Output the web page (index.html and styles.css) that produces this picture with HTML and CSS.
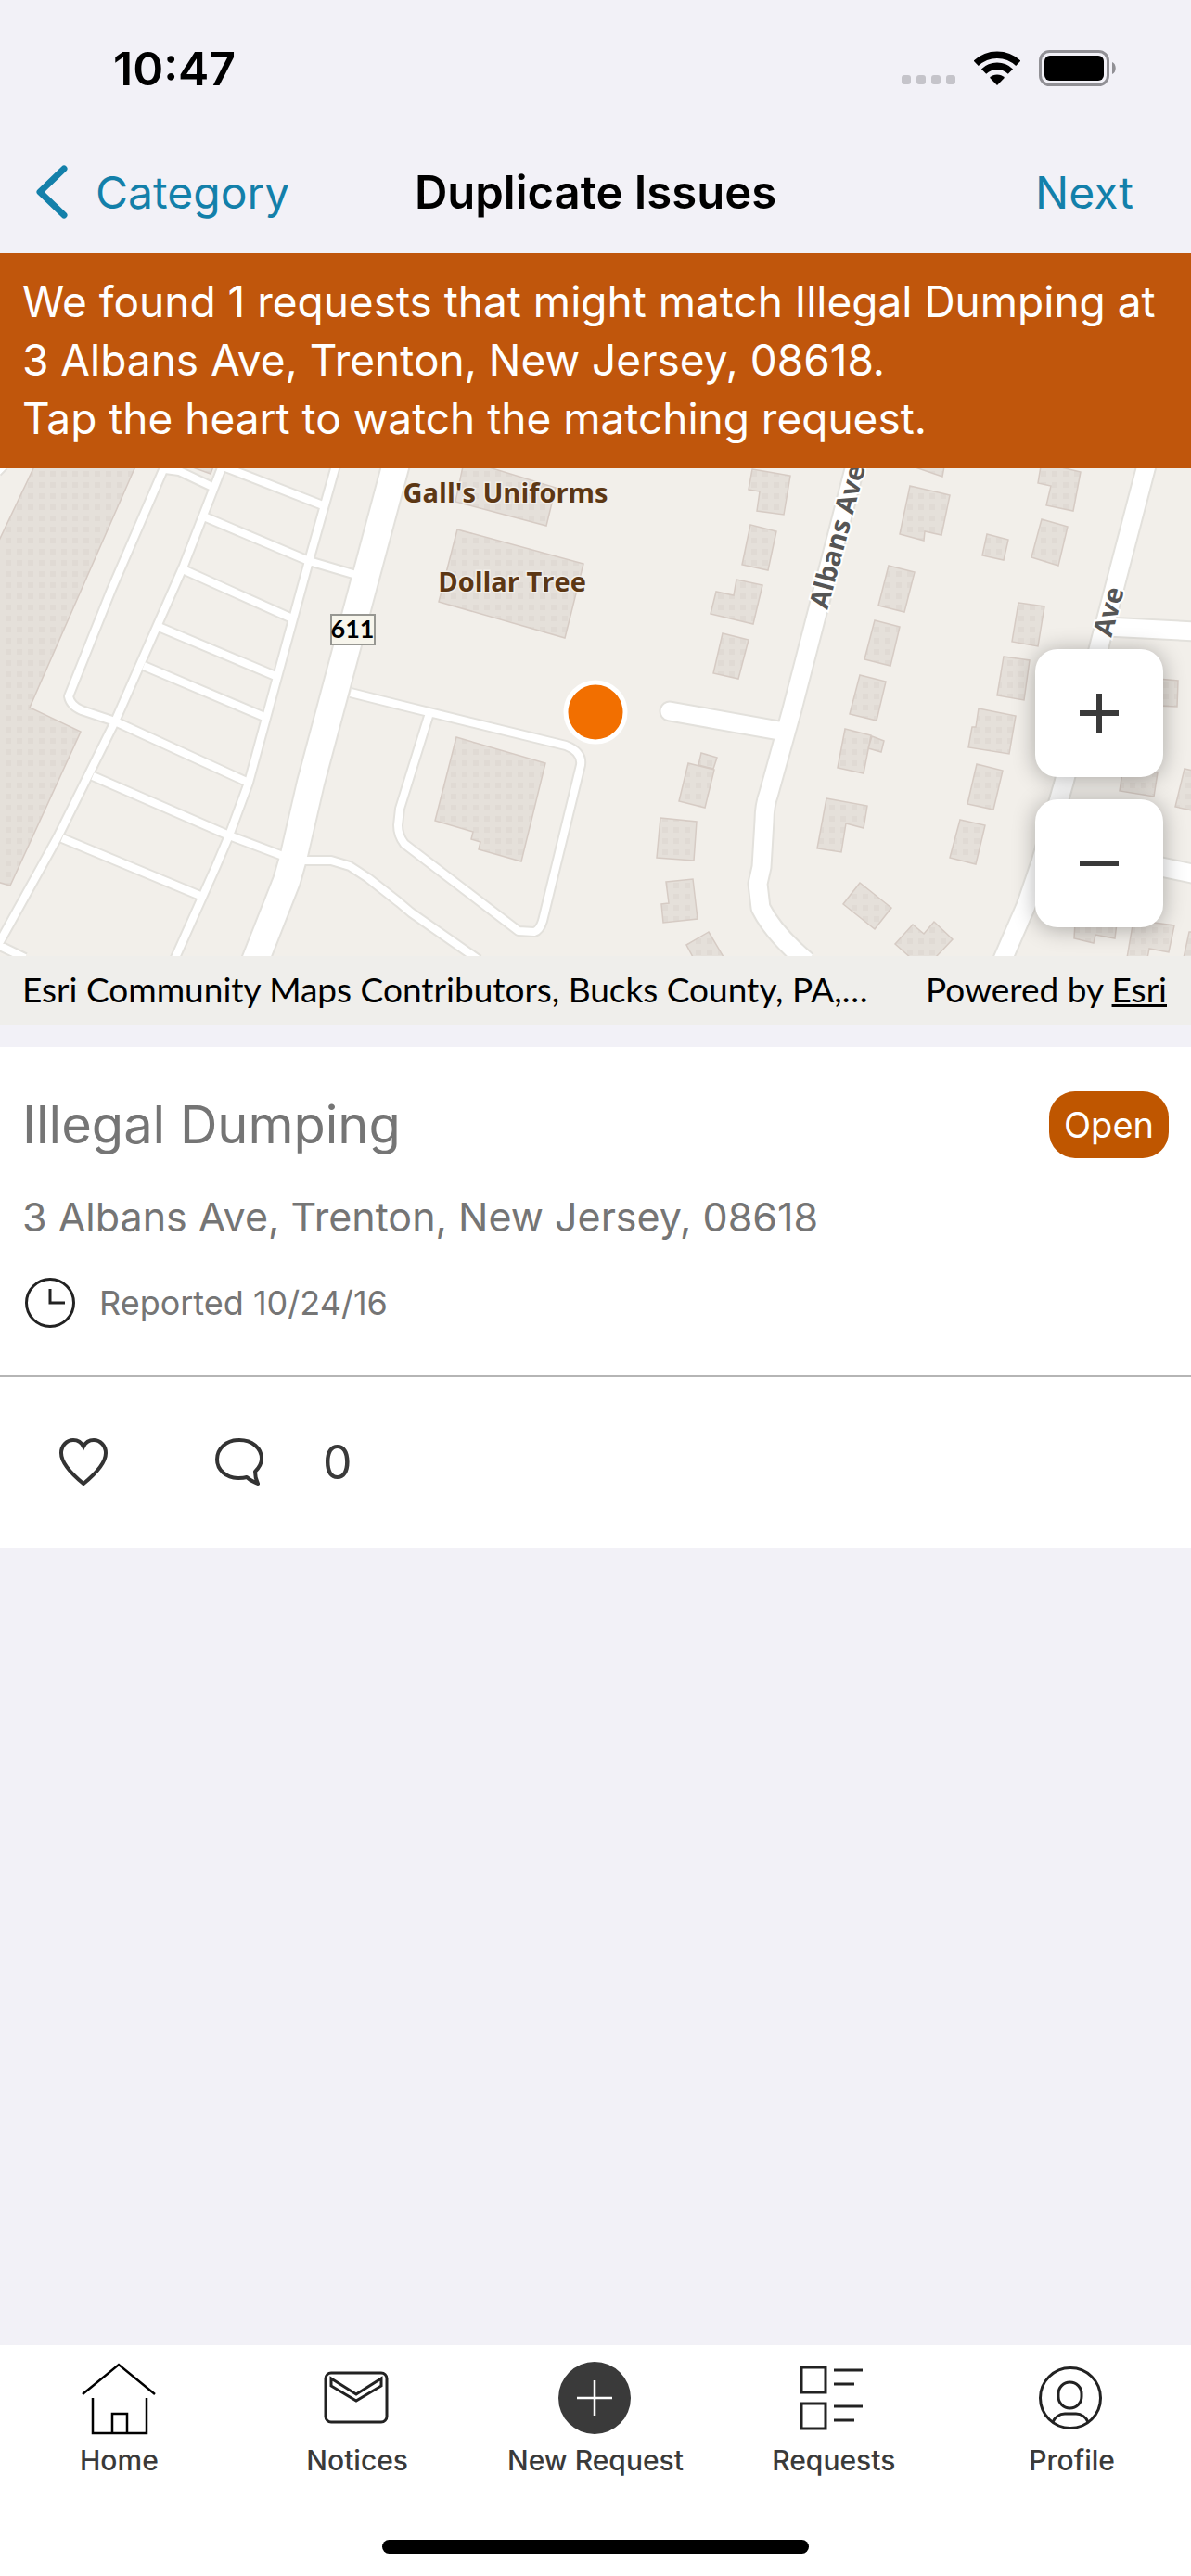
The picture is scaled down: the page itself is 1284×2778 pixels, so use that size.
FILE: index.html
```
<!DOCTYPE html>
<html lang="en">
<head>
    <meta charset="UTF-8">
    <meta name="viewport" content="width=device-width, initial-scale=1.0">
    <title>Duplicate Issues</title>
    <link rel="stylesheet" href="styles.css">
</head>
<body>
    <div class="status-bar">
        <span class="time">10:47</span>
        <div class="status-icons">
            <svg width="58" height="10" viewBox="0 0 58 10" class="signal">
                <rect x="0" width="10" height="10" rx="3"/>
                <rect x="16" width="10" height="10" rx="3"/>
                <rect x="32" width="10" height="10" rx="3"/>
                <rect x="48" width="10" height="10" rx="3"/>
            </svg>
            <svg width="50" height="38" viewBox="0 0 50 38">
                <path d="M2.2 13.3A33 33 0 0 1 47.8 13.3M10.6 22.1A20.7 20.7 0 0 1 39.4 22.1" fill="none" stroke="#000" stroke-width="7.5"/>
                <path d="M17 28.7A11.5 11.5 0 0 1 33 28.7L25 37z"/>
            </svg>
            <svg width="84" height="40" viewBox="0 0 84 40">
                <rect x="1.5" y="1.5" width="73" height="36" rx="10" fill="none" stroke="#919095" stroke-width="3"/>
                <rect x="6" y="6" width="64" height="27" rx="6"/>
                <path d="M79 13C84 15 84 24 79 26z" fill="#919095"/>
            </svg>
        </div>
    </div>

    <header class="nav">
        <button class="nav-btn back">
            <svg width="34" height="58" viewBox="0 0 34 58" fill="none" stroke="#1380aa" stroke-width="7" stroke-linecap="round" stroke-linejoin="round"><path d="M30 4L4 29L30 54"/></svg>
            Category
        </button>
        <h1>Duplicate Issues</h1>
        <button class="nav-btn next">Next</button>
    </header>

    <p class="banner">We found 1 requests that might match Illegal Dumping at 3 Albans Ave, Trenton, New Jersey, 08618.<br>Tap the heart to watch the matching request.</p>

    <main>
        <section class="map">
            <svg class="map-canvas" viewBox="0 0 1284 526" preserveAspectRatio="xMidYMid slice">
                <defs>
                    <pattern id="dots" width="12" height="12" patternUnits="userSpaceOnUse">
                        <rect width="12" height="12" fill="#e5e0da"/>
                        <rect x="6" y="3" width="6" height="6" fill="#e0dad4"/>
                    </pattern>
                    <g id="lanes">
                        <path d="M178 -3L120 131L74 246Q76 256 88 261L124 273L268 339"/>
                        <path d="M240 -3L198 105L124 273L62 398L-2 514L27 528"/>
                        <path d="M362 -3L333 100L268 339L247 396L233 429L188 530"/>
                        <path d="M178 1L193 3L229 20M243 -1L348 40M222 53L333 100L384 115"/>
                        <path d="M197 109L315 162M171 171L297 224M155 213L285 268"/>
                        <path d="M100 332L247 396L305 418M67 399L216 461M-3 4L4 -3"/>
                        <path d="M378 242L430 255L610 299Q628 306 626 320L585 488Q582 498 576 500L559 499L436 405Q429 396 429 385L431 367L463 264"/>
                        <path d="M325 423H357L377 429L397 442L430 468L443 479L516 530"/>
                    </g>
                    <g id="streets">
                        <path d="M722 262L840 283" stroke-linecap="round"/>
                        <path d="M922 -3L854 260L829 350Q824 364 824 380L821 430L817 448L820 474Q834 502 870 532"/>
                        <path d="M1236 -3L1186 188L1147 339L1122 425L1106 472L1080 532"/>
                        <path d="M1193 171L1290 176M1125 403L1290 438"/>
                    </g>
                    <path id="highway" d="M427 -5L335 339L317 417L309 445L274 534"/>
                </defs>
                <rect width="1284" height="526" fill="#f2efea"/>

                <!-- buildings -->
                <g fill="url(#dots)" stroke="#d6cbc4" stroke-width="1.5">
                    <path d="M-3 82L37 -2H146L32 258L87 284L11 450L-3 446z"/>
                    <path d="M205 -2L227 6L230 -2zM499 -2H524L599 21L589 62L491 36z"/>
                    <path d="M493 66L629 103L609 183L473 144z"/>
                    <path d="M492 290L588 318L562 424L516 411L518 403L508 400L510 392L469 380z"/>
                    <path d="M811 1L852 8L845 50L816 46L819 25L807 23zM809 61L837 68L828 110L800 104z"/>
                    <path d="M794 120L822 126L812 168L766 157L772 133L791 137zM779 178L807 185L796 227L769 221z"/>
                    <path d="M756 307L773 312L769 324L753 320zM742 318L770 325L760 366L732 359z"/>
                    <path d="M712 377L751 381L748 423L708 420zM718 446L747 443L752 486L715 490L713 470L721 469z"/>
                    <path d="M740 514L764 500L780 527H747z"/>
                    <path d="M984 -2L1016 9L1018 -2zM981 19L1024 29L1015 72L997 68L996 78L970 71z"/>
                    <path d="M1064 71L1087 77L1082 99L1059 94zM1122 -2H1140L1165 4L1157 46L1128 40L1133 19L1119 16z"/>
                    <path d="M1123 55L1151 63L1141 105L1112 96zM958 105L986 112L975 155L947 148z"/>
                    <path d="M943 164L970 171L960 213L932 206zM927 223L955 230L945 272L916 265z"/>
                    <path d="M911 281L939 288L931 329L903 323zM940 289L953 294L950 306L936 302z"/>
                    <path d="M891 356L935 364L931 388L912 383L907 414L881 410zM927 447L961 474L943 497L909 470z"/>
                    <path d="M984 492L996 502L1007 489L1027 508L1008 528H982L965 513z"/>
                    <path d="M1098 145L1126 149L1119 192L1091 187zM1082 203L1110 207L1104 250L1075 245z"/>
                    <path d="M1055 259L1095 267L1088 308L1044 301L1048 279L1052 279z"/>
                    <path d="M1053 319L1081 326L1071 368L1043 362zM1035 379L1062 385L1052 427L1024 420z"/>
                    <path d="M1248 227L1270 229L1269 257L1246 256zM1211 322L1248 328L1244 354L1207 348z"/>
                    <path d="M1277 324L1290 327V370L1267 365zM1159 490H1204L1202 507L1181 503L1179 512L1158 507z"/>
                    <path d="M1222 487L1266 493L1260 522L1239 518L1237 528H1215zM1282 500H1290V528H1276z"/>
                </g>

                <!-- roads: casing first, then the white fill -->
                <g fill="none" stroke="#e3e1dc" stroke-linejoin="round">
                    <use href="#lanes" stroke-width="12"/>
                    <use href="#streets" stroke-width="23"/>
                    <use href="#highway" stroke-width="32"/>
                </g>
                <g fill="none" stroke="#fff" stroke-linejoin="round">
                    <use href="#lanes" stroke-width="8"/>
                    <use href="#streets" stroke-width="19"/>
                    <use href="#highway" stroke-width="28"/>
                </g>

                <rect x="357" y="158" width="47" height="32" fill="#f7f5ec" stroke="#979792" stroke-width="2"/>
                <text class="shield" x="380" y="183" text-anchor="middle">611</text>
                <text class="poi" x="545" y="37" text-anchor="middle">Gall's Uniforms</text>
                <text class="poi" x="552" y="133" text-anchor="middle">Dollar Tree</text>
                <text class="street" transform="translate(892 153) rotate(-75)">Albans Ave</text>
                <text class="street" transform="translate(1198 183) rotate(-75)">Ave</text>

                <circle cx="642" cy="263" r="32" fill="#f26f00" stroke="#fff" stroke-width="5"/>
            </svg>
            <div class="zoom">
                <button aria-label="Zoom in"><svg width="42" height="42" viewBox="0 0 42 42" stroke="#3a3a3a" stroke-width="6"><path d="M0 21H42M21 0V42"/></svg></button>
                <button aria-label="Zoom out"><svg width="42" height="42" viewBox="0 0 42 42" stroke="#3a3a3a" stroke-width="6"><path d="M0 21H42"/></svg></button>
            </div>
        </section>
        <div class="attribution">
            <span class="credits">Esri Community Maps Contributors, Bucks County, PA,…</span>
            <span>Powered by <a href="#">Esri</a></span>
        </div>

        <article class="card">
            <div class="card-body">
                <div class="card-head">
                    <h2>Illegal Dumping</h2>
                    <span class="badge">Open</span>
                </div>
                <p class="address">3 Albans Ave, Trenton, New Jersey, 08618</p>
                <p class="reported">
                    <svg width="54" height="54" viewBox="0 0 54 54" fill="none" stroke="#222" stroke-width="3"><circle cx="27" cy="27" r="25.5"/><path d="M27 12V27H43"/></svg>
                    Reported 10/24/16
                </p>
            </div>
            <div class="actions">
                <button aria-label="Watch">
                    <svg width="52" height="52" viewBox="0 0 52 52" fill="none" stroke="#333" stroke-width="4"><path d="M26 49C15 40 2 28 2 16C2 8 8 2 15 2C20 2 24 5 26 9C28 5 32 2 37 2C44 2 50 8 50 16C50 28 37 40 26 49z"/></svg>
                </button>
                <button class="comments">
                    <svg width="52" height="52" viewBox="0 0 52 52" fill="none" stroke="#333" stroke-width="4" stroke-linejoin="round"><path d="M34 42C31 43 28 43 25 43C12 43 2 34 2 23C2 11 12 2 26 2C40 2 50 11 50 22C50 28 47 32 43 36C43 41 44 45 46 49C42 47 38 46 34 42z"/></svg>
                    0
                </button>
            </div>
        </article>
    </main>

    <nav class="tabs">
        <a href="#">
            <svg width="80" height="80" viewBox="0 0 80 80" fill="none" stroke="#000" stroke-width="2.5"><path d="M1 35L40 3L79 35M12 39V77H70V39M33 77V56H49V77"/></svg>
            Home
        </a>
        <a href="#">
            <svg width="80" height="80" viewBox="0 0 80 80" fill="none" stroke="#222" stroke-width="3"><rect x="6" y="12" width="66" height="53" rx="6"/><path d="M12 18L39 35L66 18V26L39 42L12 26z"/></svg>
            Notices
        </a>
        <a href="#">
            <svg width="80" height="80" viewBox="0 0 80 80"><circle cx="39" cy="39" r="39" fill="#3a3a3a"/><path d="M20 39H58M39 20V58" stroke="#fff" stroke-width="2.5"/></svg>
            New Request
        </a>
        <a href="#">
            <svg width="80" height="80" viewBox="0 0 80 80" fill="none" stroke="#222" stroke-width="3"><path d="M5 6H31V33H5zM5 45H31V72H5zM40 9H71M40 24H62M40 48H71M40 63H62"/></svg>
            Requests
        </a>
        <a href="#">
            <svg width="80" height="80" viewBox="0 0 80 80" fill="none" stroke="#222" stroke-width="3"><circle cx="38" cy="39" r="32.5"/><rect x="25" y="22" width="25" height="28" rx="12.5"/><path d="M19 65C21 60 26 56 32 56H44C50 56 55 60 57 65"/></svg>
            Profile
        </a>
        <div class="home-indicator"></div>
    </nav>
</body>
</html>
```
FILE: styles.css
```
* {
    box-sizing: border-box;
}
body {
    margin: 0;
    min-height: 100vh;
    display: flex;
    flex-direction: column;
    font-family: Inter, 'Liberation Sans', sans-serif;
    background-color: #f2f1f7;
    color: #000;
}
h1, h2, p {
    margin: 0;
    font-weight: 400;
}
button {
    padding: 0;
    border: none;
    background: none;
    font-family: inherit;
    color: inherit;
    cursor: pointer;
}
svg {
    display: block;
    flex-shrink: 0;
}

/* status bar and navigation */
.status-bar {
    height: 141px;
    padding: 6px 80px 0 122px;
    display: flex;
    align-items: center;
    justify-content: space-between;
}
.time {
    font-size: 50px;
    font-weight: 600;
}
.status-icons {
    display: flex;
    align-items: center;
    gap: 20px;
}
.signal {
    margin-bottom: 3px;
    fill: #c5c4ca;
    align-self: flex-end;
}
.nav {
    height: 132px;
    padding: 0 39px;
    display: grid;
    grid-template-columns: 1fr auto 1fr;
    align-items: center;
}
.nav h1 {
    font-size: 49px;
    font-weight: 600;
}
.nav-btn {
    font-size: 48px;
    color: #1380aa;
}
.back {
    display: flex;
    align-items: center;
    gap: 30px;
}
.next {
    justify-self: end;
    padding-right: 23px;
}
.banner {
    padding: 21px 24px 22px;
    background-color: #c0560c;
    color: #fff;
    font-size: 46px;
    line-height: 63px;
}

/* map */
.map {
    position: relative;
}
.map-canvas {
    width: 100%;
    height: 526px;
}
.poi, .street, .shield {
    font-family: 'Open Sans', sans-serif;
    font-size: 29px;
    font-weight: 700;
}
.poi {
    fill: #5c3714;
    stroke: #f2efea;
    stroke-width: 3px;
    paint-order: stroke;
}
.street {
    fill: #555;
    stroke: #fff;
    stroke-width: 4px;
    paint-order: stroke;
}
.shield {
    font-family: Lato, sans-serif;
    font-size: 27px;
}
.zoom {
    position: absolute;
    right: 30px;
    bottom: 31px;
    display: flex;
    flex-direction: column;
    gap: 24px;
}
.zoom button {
    width: 138px;
    height: 138px;
    display: flex;
    align-items: center;
    justify-content: center;
    border-radius: 24px;
    background-color: #fff;
    box-shadow: 0 2px 24px rgba(0, 0, 0, 0.3);
}
.attribution {
    display: flex;
    justify-content: space-between;
    gap: 24px;
    padding: 0 26px 2px 24px;
    background-color: #efeeeb;
    font-family: Lato, sans-serif;
    font-size: 37px;
    line-height: 72px;
    white-space: nowrap;
}
.credits {
    overflow: hidden;
    text-overflow: ellipsis;
}
.attribution a {
    color: inherit;
}

/* request card */
.card {
    margin-top: 24px;
    background-color: #fff;
    color: #757575;
}
.card-body {
    padding: 48px 24px 51px;
    border-bottom: 2px solid #b5b5b5;
}
.card-head {
    display: flex;
    align-items: center;
    justify-content: space-between;
}
.card-head h2 {
    font-size: 56px;
    line-height: 72px;
}
.badge {
    padding: 0 16px;
    border-radius: 28px;
    background-color: #bf5600;
    color: #fff;
    font-size: 38px;
    line-height: 72px;
}
.address {
    margin-top: 35px;
    font-size: 43px;
    line-height: 56px;
}
.reported {
    margin-top: 38px;
    padding-left: 3px;
    display: flex;
    align-items: center;
    gap: 26px;
    font-size: 36px;
}
.actions {
    height: 184px;
    padding: 0 64px;
    display: flex;
    align-items: center;
    gap: 116px;
    color: #3a3a3a;
}
.comments {
    display: flex;
    align-items: center;
    gap: 64px;
    font-size: 50px;
}

/* tab bar */
.tabs {
    position: relative;
    height: 249px;
    margin-top: auto;
    padding-top: 18px;
    display: grid;
    grid-template-columns: repeat(5, 1fr);
    background-color: #fff;
}
.tabs a {
    display: flex;
    flex-direction: column;
    align-items: center;
    gap: 8px;
    color: #3a3a3a;
    font-size: 30px;
    font-weight: 500;
    line-height: 36px;
    text-decoration: none;
}
.home-indicator {
    position: absolute;
    left: 50%;
    bottom: 24px;
    width: 460px;
    height: 15px;
    margin-left: -230px;
    border-radius: 8px;
    background-color: #000;
}
```
